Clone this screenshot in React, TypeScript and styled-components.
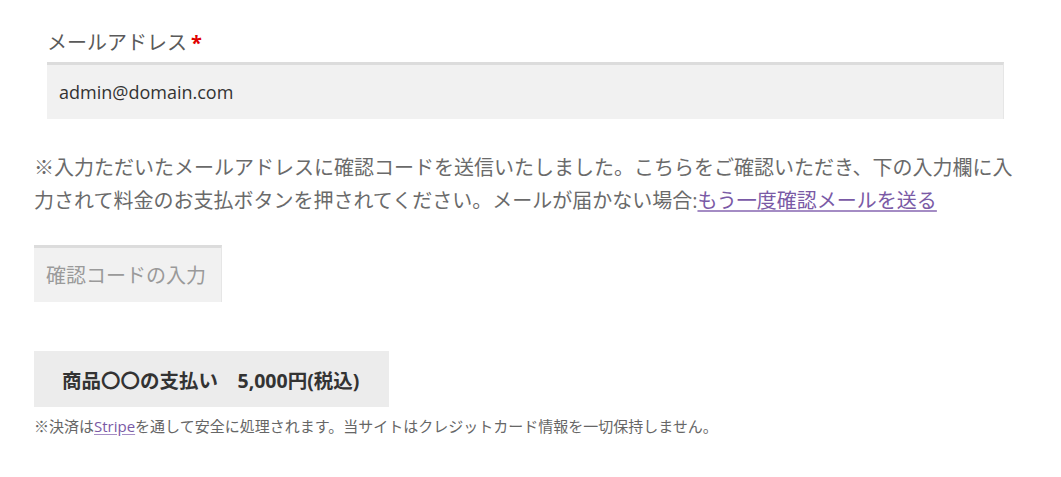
import React from "react";
import styled, { createGlobalStyle } from "styled-components";

const GlobalStyle = createGlobalStyle`
  body {
    margin: 0;
    background: #ffffff;
    font-family: "Open Sans", "Noto Sans CJK JP", sans-serif;
  }
`;

const Page = styled.div`
  padding: 27px 34px 20px 34px;
  width: 993px;
`;

const Field = styled.div`
  display: flex;
  flex-direction: column;
  gap: 3px;
  margin: 0 23px 0 13px;
`;

const Label = styled.label`
  font-size: 20px;
  line-height: 32px;
  color: #5a5a5a;
`;

const Required = styled.span`
  color: #e00000;
  font-weight: 700;
  margin-left: 4px;
`;

const TextInput = styled.input<{ $width?: string }>`
  box-sizing: border-box;
  width: ${({ $width }) => $width || "100%"};
  height: 57px;
  padding: 0 12px;
  border: none;
  border-top: 3px solid #dcdcdc;
  border-right: 1px solid #e6e6e6;
  background: #f1f1f1;
  font-family: "Open Sans", "Noto Sans CJK JP", sans-serif;
  font-size: ${({ $width }) => ($width ? "20px" : "18px")};
  color: #333333;
  outline: none;

  &::placeholder {
    color: #9a9a9a;
  }
`;

const Notice = styled.p`
  margin: 32px 0 0 0;
  font-size: 20px;
  line-height: 33px;
  color: #6a6a6a;
`;

const Link = styled.a`
  color: #7a5aa6;
  text-decoration: underline;
  text-decoration-color: #a48cc4;
  text-underline-offset: 2px;
`;

const CodeRow = styled.div`
  margin-top: 28px;
`;

const PayButton = styled.button`
  margin-top: 49px;
  height: 56px;
  padding: 0 30px 0 28px;
  border: none;
  background: #ececec;
  font-family: "Open Sans", "Noto Sans CJK JP", sans-serif;
  font-size: 19.5px;
  font-weight: 700;
  color: #333333;
  cursor: pointer;
`;

const Footnote = styled.p`
  margin: 9px 0 0 0;
  font-size: 15px;
  line-height: 20px;
  color: #666666;
`;

export default function App() {
  return (
    <>
      <GlobalStyle />
      <Page>
        <Field>
          <Label>
            メールアドレス<Required>*</Required>
          </Label>
          <TextInput type="email" defaultValue="admin@domain.com" />
        </Field>
        <Notice>
          ※入力ただいたメールアドレスに確認コードを送信いたしました。こちらをご確認いただき、下の入力欄に入力されて料金のお支払ボタンを押されてください。メールが届かない場合:
          <Link href="#">もう一度確認メールを送る</Link>
        </Notice>
        <CodeRow>
          <TextInput $width="188px" placeholder="確認コードの入力" />
        </CodeRow>
        <PayButton>商品〇〇の支払い　5,000円(税込)</PayButton>
        <Footnote>
          ※決済は<Link href="#">Stripe</Link>
          を通して安全に処理されます。当サイトはクレジットカード情報を一切保持しません。
        </Footnote>
      </Page>
    </>
  );
}
